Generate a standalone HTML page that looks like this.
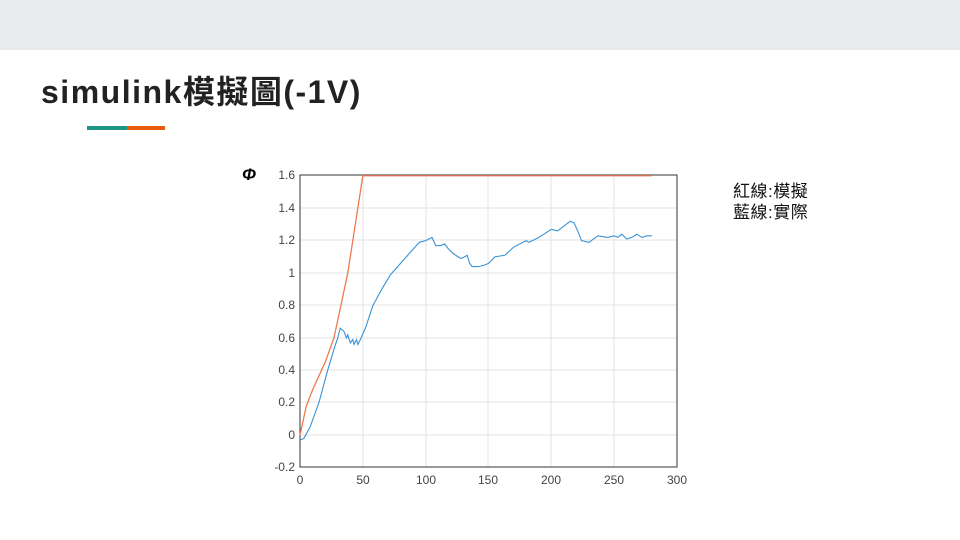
<!DOCTYPE html>
<html><head><meta charset="utf-8"><style>
body{margin:0;width:960px;height:540px;background:#fff;position:relative;overflow:hidden;font-family:"Liberation Sans","Noto Sans CJK TC",sans-serif}
.top{position:absolute;left:0;top:0;width:960px;height:50px;background:#e8eaeb}
.title{position:absolute;left:41px;top:67px;font-size:32px;font-weight:bold;color:#222;letter-spacing:1.5px}
.l1{position:absolute;left:87px;top:126px;width:40px;height:4px;background:#1a9682}
.l2{position:absolute;left:127px;top:126px;width:38px;height:4px;background:#e95d0f}
.leg{position:absolute;left:733px;top:181px;font-size:17px;line-height:21px;color:#111;letter-spacing:0.5px}
svg text{font-family:"Liberation Sans","DejaVu Sans",sans-serif;font-size:12px;fill:#444}
</style></head><body>
<div class="top"></div>
<div class="title">simulink模擬圖(-1V)</div>
<div class="l1"></div><div class="l2"></div>
<div class="leg">紅線:模擬<br>藍線:實際</div>
<svg width="960" height="540" style="position:absolute;left:0;top:0">
<text x="242" y="180" style="font-size:17px;font-weight:bold;font-style:italic;fill:#000">Φ</text>
<g stroke="#e3e3e3" stroke-width="1">
<line x1="363" y1="175" x2="363" y2="467"/><line x1="426" y1="175" x2="426" y2="467"/><line x1="488" y1="175" x2="488" y2="467"/><line x1="551" y1="175" x2="551" y2="467"/><line x1="614" y1="175" x2="614" y2="467"/>
<line x1="300" y1="208" x2="677" y2="208"/><line x1="300" y1="240" x2="677" y2="240"/><line x1="300" y1="273" x2="677" y2="273"/><line x1="300" y1="305" x2="677" y2="305"/><line x1="300" y1="338" x2="677" y2="338"/><line x1="300" y1="370" x2="677" y2="370"/><line x1="300" y1="402" x2="677" y2="402"/><line x1="300" y1="435" x2="677" y2="435"/>
</g>
<rect x="300" y="175" width="377" height="292" fill="none" stroke="#333" stroke-width="1"/>
<g text-anchor="end">
<text x="295" y="179">1.6</text><text x="295" y="212">1.4</text><text x="295" y="244">1.2</text><text x="295" y="277">1</text><text x="295" y="309">0.8</text><text x="295" y="342">0.6</text><text x="295" y="374">0.4</text><text x="295" y="406">0.2</text><text x="295" y="439">0</text><text x="295" y="471">-0.2</text>
</g>
<g text-anchor="middle">
<text x="300" y="484">0</text><text x="363" y="484">50</text><text x="426" y="484">100</text><text x="488" y="484">150</text><text x="551" y="484">200</text><text x="614" y="484">250</text><text x="677" y="484">300</text>
</g>
<g transform="translate(300,435.3) scale(1.2567,-162.2)" fill="none">
<polyline vector-effect="non-scaling-stroke" stroke="#ee7a52" stroke-width="1.3" points="0,0 5,0.18 10,0.28 20,0.45 27,0.6 32,0.78 38,1.0 43,1.25 50,1.6 280,1.6"/>
<polyline vector-effect="non-scaling-stroke" stroke="#3a93d6" stroke-width="1.1" points="0,-0.03 3,-0.02 8,0.05 15,0.2 22,0.4 27,0.53 30,0.6 32,0.66 35,0.64 37,0.6 38,0.62 40,0.57 42,0.59 43,0.56 45,0.59 46,0.56 48,0.59 52,0.66 58,0.8 65,0.9 72,0.99 80,1.06 88,1.13 95,1.19 100,1.2 105,1.22 108,1.17 112,1.17 115,1.18 118,1.15 122,1.12 128,1.09 131,1.1 133,1.11 135,1.06 137,1.04 142,1.04 147,1.05 150,1.06 155,1.1 163,1.11 170,1.16 180,1.2 182,1.19 185,1.2 190,1.22 200,1.27 205,1.26 210,1.29 215,1.32 218,1.31 221,1.26 224,1.2 230,1.19 237,1.23 245,1.22 250,1.23 253,1.22 256,1.24 260,1.21 264,1.22 268,1.24 272,1.22 276,1.23 280,1.23"/>
</g>
</svg>
</body></html>
